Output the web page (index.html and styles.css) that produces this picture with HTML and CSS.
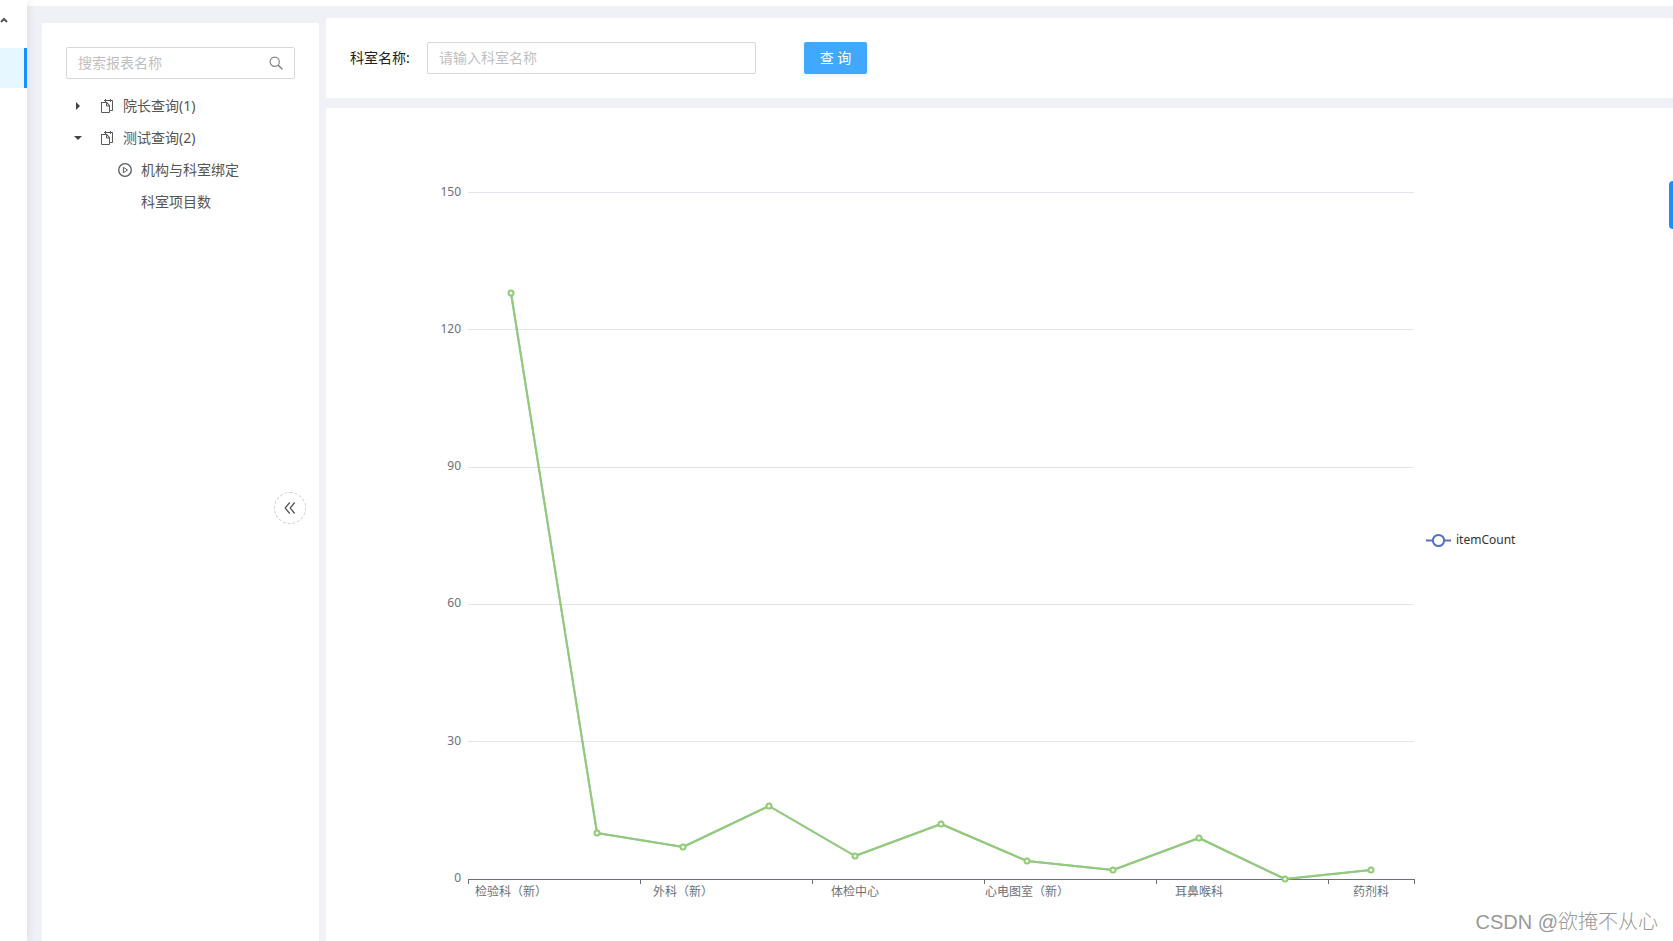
FILE: index.html
```html
<!DOCTYPE html>
<html lang="zh-CN">
<head>
<meta charset="utf-8">
<title>科室项目数</title>
<link rel="stylesheet" href="styles.css">
</head>
<body>
<div class="app">
  <nav class="sidebar" aria-label="主菜单">
    <button class="menu-toggle" type="button" aria-label="收起菜单">
      <svg width="8" height="6" viewBox="0 0 8 6"><path d="M1 5 4 2l3 3" fill="none" stroke="#555" stroke-width="2"/></svg>
    </button>
    <a class="menu-active" href="#" aria-label="报表"></a>
  </nav>
  <div class="page">
    <header class="topbar"></header>
    <div class="content">
      <aside class="reports">
        <div class="search">
          <input class="search-input" type="text" placeholder="搜索报表名称" aria-label="搜索报表名称">
          <button class="search-button" type="button" aria-label="搜索">
            <svg width="14" height="14" viewBox="0 0 14 14" fill="none" stroke="#858585"><circle cx="5.7" cy="5.7" r="4.6" stroke-width="1.2"/><path d="m9.1 9.1 4.2 4.2" stroke-width="1.5"/></svg>
          </button>
        </div>
        <ul class="tree">
          <li class="row">
            <svg class="caret" width="8" height="8" viewBox="0 0 8 8"><path d="M2 0v8l4-4z" fill="#444"/></svg>
            <svg class="copy" width="14" height="14" viewBox="0 0 14 14" fill="none" stroke="#595959"><path d="M4 3.500H1.500v10h8v-2M4 1.500h8.500v10H9.500V7L6.500 3.500H1.500M6.500 3.500V7h3M5.500 0v3M10.500 0v3M7 3.500l3 3.500"/></svg>
            <span>院长查询(1)</span>
          </li>
          <li class="row">
            <svg class="caret" width="8" height="8" viewBox="0 0 8 8"><path d="M0 2h8L4 6z" fill="#444"/></svg>
            <svg class="copy" width="14" height="14" viewBox="0 0 14 14" fill="none" stroke="#595959"><path d="M4 3.500H1.500v10h8v-2M4 1.500h8.500v10H9.500V7L6.500 3.500H1.500M6.500 3.500V7h3M5.500 0v3M10.500 0v3M7 3.500l3 3.500"/></svg>
            <span>测试查询(2)</span>
          </li>
          <li class="row leaf">
            <svg class="play" width="14" height="14" viewBox="0 0 14 14" fill="none" stroke="#595959"><circle cx="7" cy="7" r="6.300" stroke-width="1.300"/><path d="M5.400 4.300v5.400L9.500 7z"/></svg>
            <span>机构与科室绑定</span>
          </li>
          <li class="row leaf">
            <span class="play"></span>
            <span>科室项目数</span>
          </li>
        </ul>
        <button class="collapse" type="button" aria-label="收起报表列表">
          <svg width="12" height="12" viewBox="0 0 12 12" fill="none" stroke="#555" stroke-width="1.300"><path d="M5.700.5 1.200 6l4.500 5.500M10.700.5 6.200 6l4.500 5.500"/></svg>
        </button>
      </aside>
      <main class="main">
        <form class="filter">
          <label class="filter-label" for="dept">科室名称:</label>
          <input class="filter-input" id="dept" type="text" placeholder="请输入科室名称">
          <button class="query" type="button">查 询</button>
        </form>
        <section class="chart-card">
          <svg class="chart" viewBox="0 0 1347 833" role="img" aria-label="itemCount">
            <path class="grid" d="M142 84.500h946M142 221.500h946M142 359.500h946M142 496.500h946M142 633.500h946"/>
            <path class="axis" d="M142 771.500h947M142.500 772v4M314.500 772v4M486.500 772v4M658.500 772v4M830.500 772v4M1002.500 772v4M1088.500 772v4"/>
            <g class="y-labels">
              <text x="135" y="88">150</text>
              <text x="135" y="225">120</text>
              <text x="135" y="362">90</text>
              <text x="135" y="499">60</text>
              <text x="135" y="637">30</text>
              <text x="135" y="774">0</text>
            </g>
            <g class="x-labels">
              <text x="185" y="788">检验科（新）</text>
              <text x="357" y="788">外科（新）</text>
              <text x="529" y="788">体检中心</text>
              <text x="701" y="788">心电图室（新）</text>
              <text x="873" y="788">耳鼻喉科</text>
              <text x="1045" y="788">药剂科</text>
            </g>
            <polyline class="line-under" points="185,185 271,725 357,739 443,698 529,748 615,716 701,753 787,762 873,730 959,771 1045,762"/>
            <polyline class="line" points="185,185 271,725 357,739 443,698 529,748 615,716 701,753 787,762 873,730 959,771 1045,762"/>
            <g class="dots">
              <circle cx="185" cy="185" r="2.500"/><circle cx="271" cy="725" r="2.500"/><circle cx="357" cy="739" r="2.500"/><circle cx="443" cy="698" r="2.500"/><circle cx="529" cy="748" r="2.500"/><circle cx="615" cy="716" r="2.500"/><circle cx="701" cy="753" r="2.500"/><circle cx="787" cy="762" r="2.500"/><circle cx="873" cy="730" r="2.500"/><circle cx="959" cy="771" r="2.500"/><circle cx="1045" cy="762" r="2.500"/>
            </g>
            <g class="legend"><path d="M1100 432.500h25"/><circle cx="1112.500" cy="432.500" r="5.600"/></g>
            <text class="legend-text" x="1130" y="436">itemCount</text>
          </svg>
        </section>
      </main>
    </div>
  </div>
  <button class="drawer-handle" type="button" aria-label="设置"></button>
  <div class="watermark">CSDN @欲掩不从心</div>
</div>
</body>
</html>
```
FILE: styles.css
```css
* { box-sizing: border-box; }

body {
  margin: 0;
  background: #eff1f6;
  color: #555;
  font: 14px/32px "Noto Sans", "Noto Sans CJK SC", sans-serif;
}

button, input { font: inherit; }

button {
  border: 0;
  padding: 0;
  background: none;
  cursor: pointer;
}

svg { display: block; flex: none; }

.app {
  position: relative;
  display: flex;
  height: 100vh;
  overflow: hidden;
}

.sidebar {
  z-index: 1;
  flex: 0 0 27px;
  background: #fff;
  box-shadow: 2px 0 8px rgba(29, 35, 41, .08);
}

.menu-toggle {
  display: flex;
  align-items: center;
  width: 100%;
  height: 40px;
  margin-bottom: 8px;
}

.menu-active {
  display: block;
  height: 40px;
  border-right: 3px solid #1890ff;
  background: #e6f7ff;
}

.page {
  display: flex;
  flex: 1;
  flex-direction: column;
  min-width: 0;
}

.topbar {
  flex: 0 0 6px;
  background: #fff;
}

.content {
  display: flex;
  flex: 1;
  gap: 7px;
  min-height: 0;
  padding: 12px 0 0 15px;
}

.reports {
  position: relative;
  flex: 0 0 277px;
  min-width: 0;
  margin-top: 5px;
  padding: 24px;
  border-radius: 2px 2px 0 0;
  background: #fff;
}

.search {
  display: flex;
  height: 32px;
  border: 1px solid #d9d9d9;
  border-radius: 2px;
}

.search-input {
  flex: 1;
  min-width: 0;
  padding: 0 11px;
  border: 0;
  background: none;
  outline: 0;
}

.search-button { padding: 0 11px; }

::placeholder { color: #bfbfbf; opacity: 1; }

.tree {
  margin: 11px 0 0;
  padding: 0 0 0 8px;
  list-style: none;
}

.row {
  display: flex;
  align-items: center;
  height: 32px;
  white-space: nowrap;
}

.caret { margin-right: 18px; }

.copy { margin-right: 9px; }

.leaf { padding-left: 44px; }

.play {
  width: 14px;
  margin-right: 9px;
}

.collapse {
  position: absolute;
  top: 469px;
  right: 13px;
  display: grid;
  place-items: center;
  width: 32px;
  height: 32px;
  border: 1px dashed #d0d0d0;
  border-radius: 50%;
  background: #fff;
}

.main {
  display: flex;
  flex: 1;
  flex-direction: column;
  gap: 10px;
  min-width: 0;
}

.filter {
  display: flex;
  align-items: center;
  flex: 0 0 80px;
  padding: 0 24px;
  border-radius: 2px;
  background: #fff;
}

.filter-label {
  width: 77px;
  color: #222;
}

.filter-input {
  width: 329px;
  height: 32px;
  padding: 0 11px;
  border: 1px solid #d9d9d9;
  border-radius: 2px;
}

.query {
  width: 63px;
  height: 32px;
  margin-left: 48px;
  border-radius: 2px;
  background: #40a9ff;
  box-shadow: 0 2px 4px rgba(24, 144, 255, .1);
  color: #fff;
}

.chart-card {
  flex: 1;
  min-height: 0;
  border-radius: 2px 0 0 0;
  background: #fff;
}

.chart {
  width: 100%;
  height: 100%;
  font-size: 12px;
}

.grid { stroke: #e0e6f1; }

.axis { stroke: #6e7079; }

.y-labels { fill: #6e7079; text-anchor: end; }

.x-labels { fill: #6e7079; text-anchor: middle; }

.line, .line-under { fill: none; stroke-width: 2; stroke-linejoin: bevel; }

.line-under { stroke: #5470c6; stroke-opacity: .5; }

.line { stroke: #91cc75; }

.dots { fill: #fff; stroke: #91cc75; stroke-width: 2; }

.legend { fill: #fff; stroke: #5470c6; stroke-width: 2; }

.legend-text { fill: #333; }

.drawer-handle {
  position: absolute;
  top: 181px;
  right: 0;
  width: 4px;
  height: 48px;
  border-radius: 4px 0 0 4px;
  background: #1890ff;
}

.watermark {
  position: absolute;
  right: 15px;
  bottom: 3px;
  color: #999;
  font-family: "Liberation Sans", "Noto Sans CJK SC", sans-serif;
  font-size: 20px;
  font-weight: 300;
}
```
